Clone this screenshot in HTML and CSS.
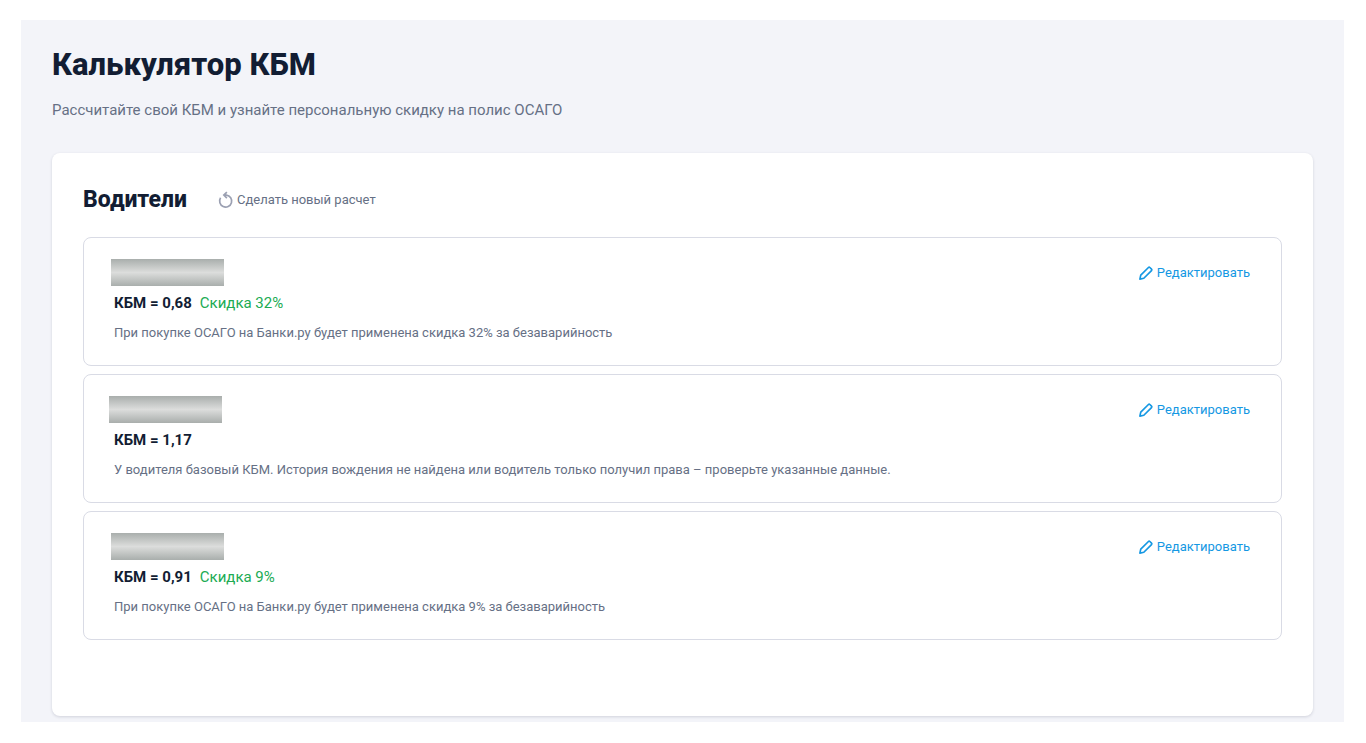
FILE: index.html
```html
<!DOCTYPE html>
<html lang="ru">
<head>
<meta charset="utf-8">
<meta name="viewport" content="width=device-width, initial-scale=1">
<title>Калькулятор КБМ</title>
<link rel="stylesheet" href="styles.css">
</head>
<body>
<main class="page">
  <h1 class="title">Калькулятор КБМ</h1>
  <p class="lead">Рассчитайте свой КБМ и узнайте персональную скидку на полис ОСАГО</p>
  <section class="panel">
    <header class="panel-head">
      <h2 class="subtitle">Водители</h2>
      <button class="action reset" type="button">
        <svg class="icon" viewBox="0 0 16 16" fill="none" stroke="currentColor" stroke-width="1.9" aria-hidden="true"><path d="M1.8 5.5A6.9 6.9 0 1 0 8.5 2.4H6M9-1 5.5 2.4 9 5.8"/></svg>
        <span>Сделать новый расчет</span>
      </button>
    </header>
    <ul class="drivers">
      <li class="driver">
        <div class="info">
          <div class="name"></div>
          <p class="rate"><strong>КБМ = 0,68</strong><span class="discount">Скидка 32%</span></p>
          <p class="note">При покупке ОСАГО на Банки.ру будет применена скидка 32% за безаварийность</p>
        </div>
        <button class="action edit" type="button">
          <svg class="icon" viewBox="0 0 16 16" fill="none" stroke="currentColor" stroke-width="1.9" stroke-linejoin="round" aria-hidden="true"><path d="M1 15l1-4.5L10.8 1.7q.8-.8 1.6 0L14.300 3.600q.8.8 0 1.600L5.500 14z"/></svg>
          <span>Редактировать</span>
        </button>
      </li>
      <li class="driver">
        <div class="info">
          <div class="name"></div>
          <p class="rate"><strong>КБМ = 1,17</strong></p>
          <p class="note">У водителя базовый КБМ. История вождения не найдена или водитель только получил права – проверьте указанные данные.</p>
        </div>
        <button class="action edit" type="button">
          <svg class="icon" viewBox="0 0 16 16" fill="none" stroke="currentColor" stroke-width="1.9" stroke-linejoin="round" aria-hidden="true"><path d="M1 15l1-4.5L10.8 1.7q.8-.8 1.6 0L14.300 3.600q.8.8 0 1.600L5.500 14z"/></svg>
          <span>Редактировать</span>
        </button>
      </li>
      <li class="driver">
        <div class="info">
          <div class="name"></div>
          <p class="rate"><strong>КБМ = 0,91</strong><span class="discount">Скидка 9%</span></p>
          <p class="note">При покупке ОСАГО на Банки.ру будет применена скидка 9% за безаварийность</p>
        </div>
        <button class="action edit" type="button">
          <svg class="icon" viewBox="0 0 16 16" fill="none" stroke="currentColor" stroke-width="1.9" stroke-linejoin="round" aria-hidden="true"><path d="M1 15l1-4.5L10.8 1.7q.8-.8 1.6 0L14.300 3.600q.8.8 0 1.600L5.500 14z"/></svg>
          <span>Редактировать</span>
        </button>
      </li>
    </ul>
  </section>
</main>
</body>
</html>
```
FILE: styles.css
```css
* {
  box-sizing: border-box;
}

body {
  margin: 0;
  padding: 20px 22px 21px 21px;
  background: #fff;
  color: #121d33;
  font-family: Roboto, "Liberation Sans", sans-serif;
}

h1, h2, p, ul {
  margin: 0;
  padding: 0;
}

.page {
  padding: 25px 31px 6px;
  background: #f3f4f9;
}

.title {
  font-size: 31px;
  line-height: 40px;
  font-weight: 800;
}

.lead {
  margin-top: 13px;
  color: #667085;
  font-size: 15px;
  line-height: 24px;
}

.panel {
  margin-top: 31px;
  padding: 31px 31px 76px;
  border-radius: 8px;
  background: #fff;
  box-shadow: 0 1px 3px rgba(30, 35, 70, 0.16);
}

.panel-head {
  display: flex;
  align-items: center;
  gap: 32px;
}

.subtitle {
  font-size: 23px;
  line-height: 32px;
  font-weight: 800;
}

.action {
  display: flex;
  align-items: center;
  gap: 4px;
  padding: 0;
  border: 0;
  background: none;
  font: inherit;
  font-size: 13px;
  line-height: 20px;
  cursor: pointer;
}

.icon {
  width: 14px;
  height: 14px;
  overflow: visible;
}

.reset {
  color: #667085;
}

.reset .icon {
  color: #9ba0b2;
}

.edit {
  flex: none;
  margin-top: 4px;
  color: #1598e3;
}

.drivers {
  display: grid;
  gap: 8px;
  margin-top: 21px;
  list-style: none;
}

.driver {
  display: flex;
  justify-content: space-between;
  align-items: flex-start;
  padding: 21px 31px 22px 30px;
  border: 1px solid #d9dbe5;
  border-radius: 8px;
}

.name {
  width: 113px;
  height: 27px;
  margin-left: -3px;
  background: linear-gradient(#a9aeac, #dcdddc 50%, #a9aeac);
}

.driver:nth-child(2) .name {
  margin-left: -5px;
}

.rate {
  display: flex;
  gap: 8px;
  margin-top: 5px;
  font-size: 15px;
  line-height: 24px;
}

.rate strong {
  font-weight: 700;
}

.discount {
  color: #20ab53;
}

.note {
  margin-top: 8px;
  color: #667085;
  font-size: 13px;
  line-height: 20px;
}
```
